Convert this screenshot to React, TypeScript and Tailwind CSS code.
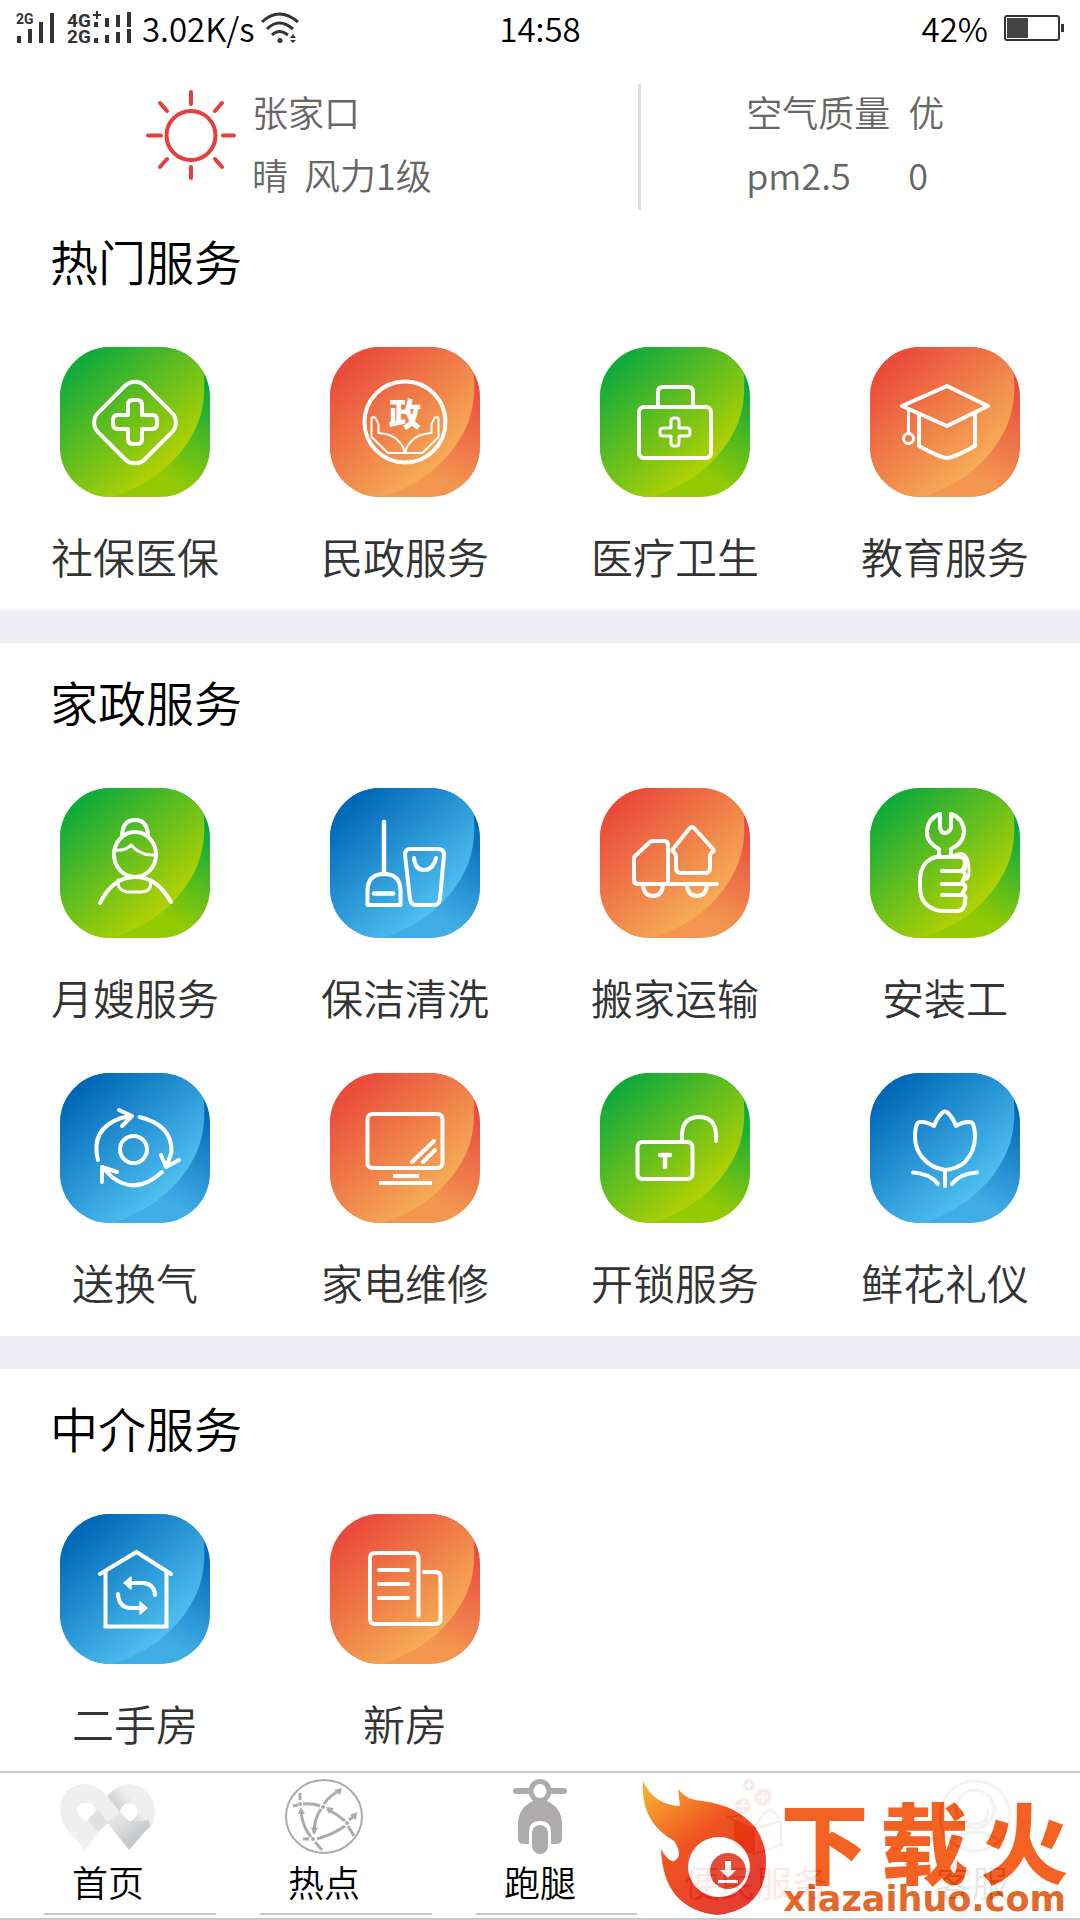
import type { ReactNode } from 'react';

type Tone = 'green' | 'orange' | 'blue';

type Service = {
    name: string;
    tone: Tone;
    icon: ReactNode;
};

const TONES: Record<Tone, { main: [string, string]; edge: [string, string] }> = {
    green: { main: ['#12ab3b', '#bad300'], edge: ['#00a743', '#93ca04'] },
    orange: { main: ['#ea4b3b', '#f6b157'], edge: ['#e94740', '#f39650'] },
    blue: { main: ['#0068b7', '#53c4f3'], edge: ['#0066b5', '#41ade6'] },
};

const hotServices: Service[] = [
    {
        name: '社保医保',
        tone: 'green',
        icon: (
            <>
                <rect x="42" y="42.500" width="66" height="66" rx="14" transform="rotate(45 75 75.500)" />
                <path d="M68 68V58q0-5 5-5h4q5 0 5 5v10h10q5 0 5 5v4q0 5-5 5H82v10q0 5-5 5h-4q-5 0-5-5V82H58q-5 0-5-5v-4q0-5 5-5z" />
            </>
        ),
    },
    {
        name: '民政服务',
        tone: 'orange',
        icon: (
            <>
                <circle cx="75" cy="75" r="40.500" />
                <g strokeWidth="2">
                    <path d="M41.500 90V72q0-2 2-2l2 1 3 6v9q14 1 20 8 6 6 6 12H58z" />
                    <path d="M108.500 90V72q0-2-2-2l-2 1-3 6v9q-14 1-20 8-6 6-6 12h17z" />
                </g>
                <text
                    x="75"
                    y="79"
                    textAnchor="middle"
                    fill="#fff"
                    stroke="none"
                    className="text-[32px] font-black"
                >
                    政
                </text>
            </>
        ),
    },
    {
        name: '医疗卫生',
        tone: 'green',
        icon: (
            <>
                <rect x="39" y="60" width="72" height="51" rx="5" />
                <path d="M58 59V45q0-5 5-5h25q5 0 5 5v14" />
                <path
                    strokeWidth="3"
                    d="M71 81v-7q0-3 3-3h2q3 0 3 3v7h8q3 0 3 3v2q0 3-3 3h-8v7q0 3-3 3h-2q-3 0-3-3v-7h-8q-3 0-3-3v-2q0-3 3-3z"
                />
            </>
        ),
    },
    {
        name: '教育服务',
        tone: 'orange',
        icon: (
            <>
                <path d="M77 39l41 20-41 20-45-20z" />
                <path d="M49 68v31q22 12 28 12t28-12V67" />
                <path d="M38.500 63v23" strokeWidth="3" />
                <circle cx="38.500" cy="91.500" r="5" strokeWidth="3" />
            </>
        ),
    },
];

const homeServices: Service[] = [
    {
        name: '月嫂服务',
        tone: 'green',
        icon: (
            <>
                <ellipse cx="75" cy="66.500" rx="21" ry="22.500" />
                <path d="M62 47q1-15 13-15t13 15" />
                <path d="M56 62q10 1 15-5 10 11 23 10" strokeWidth="3" />
                <path d="M40 115q13-26 35-26t36 25" />
                <path d="M58 92q-1 12 12 12h10q13 0 10-12" strokeWidth="3" />
            </>
        ),
    },
    {
        name: '保洁清洗',
        tone: 'blue',
        icon: (
            <>
                <path d="M54 34v52" strokeWidth="4.500" />
                <path d="M37.500 117v-14q0-17 16.500-17t16.500 17v14z" />
                <path d="M44 105.500h19" strokeWidth="4.500" />
                <path d="M80 61h28q6 0 6 6l-4 44q-1 6-6 6H86q-5 0-6-6l-5-44q0-6 5-6z" />
                <path d="M84 70q1 12 10 12t12-12" />
            </>
        ),
    },
    {
        name: '搬家运输',
        tone: 'orange',
        icon: (
            <>
                <path d="M117 96H38q-4 0-4-4V69l16-15q1-1 3-1h11q4 0 4 4v39" />
                <path d="M89 41q3-4 6 0l18 20q2 2-1 3l-2 3v13q0 5-5 5H81q-5 0-5-5V67l-2-3q-3-1-1-3z" />
                <path d="M43 97q1 11 10 11t10-11M87 97q1 11 10 11t10-11" />
            </>
        ),
    },
    {
        name: '安装工',
        tone: 'green',
        icon: (
            <>
                <path d="M69 68v-7q-13-7-12-18 1-13 13-17v14q1 5 5 5t6-5V26q12 4 13 17 0 12-13 18v7" />
                <path d="M66 69h23q6 0 6 5t-3 9q5 3 2 7l-2 5q5 3 3 6l-3 5q5 2 3 6 0 11-8 11H70q-20-4-20-24v-8q1-18 16-22z" />
                <path d="M72 83h21M72 96h21M72 107h21" />
                <path d="M83 68q16-9 16 15 0 9-5 9" strokeWidth="3" />
                <path d="M94 70q4 4 1 12" strokeWidth="2.500" />
            </>
        ),
    },
    {
        name: '送换气',
        tone: 'blue',
        icon: (
            <>
                <circle cx="73.500" cy="76.500" r="13.500" />
                <path d="M38 87q-8-31 23-42l11-2M59 37l13 6-10 10" />
                <path d="M79.500 44q33 8 32 35l-5 15M101 82l5 12 13-7" />
                <path d="M102 99q-26 24-50 5l-10-10M42 109V94l15 5" />
            </>
        ),
    },
    {
        name: '家电维修',
        tone: 'orange',
        icon: (
            <>
                <rect x="37.500" y="41" width="75" height="54" rx="5" />
                <path d="M82 89l22-21M93 89l12-12" />
                <path d="M63 103h26M49 110h53" strokeLinecap="butt" />
            </>
        ),
    },
    {
        name: '开锁服务',
        tone: 'green',
        icon: (
            <>
                <rect x="37.500" y="69" width="55" height="37" rx="5" />
                <path d="M82 68v-7q1-17 17-17t17 17v7" />
                <path d="M60 82h10M65 82v12" strokeWidth="4.500" />
            </>
        ),
    },
    {
        name: '鲜花礼仪',
        tone: 'blue',
        icon: (
            <>
                <path d="M75 97C55 94 45 78 45 64q0-8 2-13 1-2 4-2 7 0 13 4 3-8 8-13 3-3 6 0 5 5 8 13 6-4 13-4 3 0 4 2 2 5 2 13 0 14-10 25-8 7-20 8z" />
                <path d="M75 97v16M43 99.500q17 1 25 11.500M107 99.500q-17 1-25 11.500" />
            </>
        ),
    },
];

const agencyServices: Service[] = [
    {
        name: '二手房',
        tone: 'blue',
        icon: (
            <>
                <path d="M40 60l36.500-22L111 60" />
                <path d="M45.500 58v54.500h61V58" strokeLinejoin="miter" />
                <path d="M72 69h10q12 0 13 12M58 80q1 14 13 14h9" />
                <path
                    d="M64 69l7-6v12zM87 94l-7-6v12z"
                    fill="#fff"
                    strokeWidth="1.500"
                />
            </>
        ),
    },
    {
        name: '新房',
        tone: 'orange',
        icon: (
            <>
                <path d="M88.500 102V44q0-5-5-5H45q-5 0-5 5v61q0 5 5 5h60q5.500 0 5.500-5V63q0-5-5-5H94" />
                <path d="M49 56h29M49 70h29M49 84h29" />
            </>
        ),
    },
];

function ServiceIcon({ id, tone, children }: { id: string; tone: Tone; children: ReactNode }) {
    const { main, edge } = TONES[tone];

    return (
        <svg viewBox="0 0 150 150" className="size-[150px]" aria-hidden="true">
            <defs>
                <clipPath id={`${id}-clip`}>
                    <rect width="150" height="150" rx="50" />
                </clipPath>
                <linearGradient id={`${id}-main`} x1="18" y1="18" x2="112" y2="124" gradientUnits="userSpaceOnUse">
                    <stop stopColor={main[0]} />
                    <stop offset="1" stopColor={main[1]} />
                </linearGradient>
                <linearGradient id={`${id}-edge`} x1="150" y1="35" x2="105" y2="130" gradientUnits="userSpaceOnUse">
                    <stop stopColor={edge[0]} />
                    <stop offset="1" stopColor={edge[1]} />
                </linearGradient>
            </defs>
            <g clipPath={`url(#${id}-clip)`}>
                <rect width="150" height="150" fill={`url(#${id}-edge)`} />
                <path
                    d="M0 0h140C149 45 144 73 126 98 109 122 86 139 52 150H0z"
                    fill={`url(#${id}-main)`}
                />
            </g>
            <g
                fill="none"
                stroke="#fff"
                strokeWidth="4"
                strokeLinecap="round"
                strokeLinejoin="round"
            >
                {children}
            </g>
        </svg>
    );
}

function ServiceSection({ title, services }: { title: string; services: Service[] }) {
    return (
        <section className="bg-white pt-[30px] pb-[26px] last:flex-1 last:pb-4">
            <h2 className="pl-[50px] text-[48px] leading-14 font-[350] text-black">{title}</h2>
            <ul className="mt-[59px] grid grid-cols-4 gap-y-12">
                {services.map((service) => (
                    <li key={service.name}>
                        <a href="#" className="flex flex-col items-center gap-[31px]">
                            <ServiceIcon id={service.name} tone={service.tone}>
                                {service.icon}
                            </ServiceIcon>
                            <span className="text-[42px] leading-14 font-[350] text-[#333]">
                                {service.name}
                            </span>
                        </a>
                    </li>
                ))}
            </ul>
        </section>
    );
}

function StatusBar() {
    return (
        <div className="flex h-14 items-center px-4 text-[33px] leading-[54px] font-[350] text-black">
            <div className="flex flex-1 items-center">
                <svg
                    width="118"
                    height="34"
                    viewBox="0 0 118 34"
                    fill="#333"
                    className="overflow-visible"
                    aria-hidden="true"
                >
                    <text x="0" y="13" className="font-['Roboto'] text-[14px] font-bold">
                        2G
                    </text>
                    <path d="M1 25h4v7H1zM12 18h4v14h-4zM23 11h4v21h-4zM34 2h4v30h-4z" />
                    <text x="51" y="16" className="font-['Roboto'] text-[19px] font-bold">
                        4G
                    </text>
                    <text x="51" y="32" className="font-['Roboto'] text-[19px] font-bold">
                        2G
                    </text>
                    <path d="M77 3h8v2h-8zM80 0h2v8h-2zM78 11h4v5h-4zM89 7h4v9h-4zM100 4h4v12h-4zM111 1h4v15h-4z" />
                    <path d="M78 27h4v5h-4zM89 24h4v8h-4zM100 21h4v11h-4zM111 18h4v14h-4z" />
                </svg>
                <span className="ml-2">3.02K/s</span>
                <svg width="38" height="32" viewBox="0 0 38 32" className="ml-1.5" aria-hidden="true">
                    <g fill="none" stroke="#333" strokeWidth="3">
                        <path d="M1 10q17-16 36 0M6 17q12-12 26 0M11 23q7-7 16 0" />
                    </g>
                    <circle cx="19" cy="28.500" r="2.500" fill="#333" />
                    <path d="M29 26l3-4 3 4zM29 28l3 3 3-3z" fill="#333" />
                </svg>
            </div>
            <time>14:58</time>
            <div className="flex flex-1 items-center justify-end gap-4">
                <span>42%</span>
                <svg width="60" height="26" viewBox="0 0 60 26" aria-hidden="true">
                    <rect x="1" y="1" width="54" height="24" rx="2" fill="none" stroke="#333" strokeWidth="2" />
                    <path d="M3 3h21v20H3z" fill="#444" />
                    <path d="M57 9h3v8h-3z" fill="#333" />
                </svg>
            </div>
        </div>
    );
}

function Weather() {
    return (
        <div className="mt-7 -mb-2 flex text-[36px] leading-[52px] font-[350] text-[#666]">
            <div className="flex w-[59%] items-start gap-4 pl-[146px]">
                <svg
                    width="90"
                    height="90"
                    viewBox="0 0 90 90"
                    fill="none"
                    stroke="#e43f3b"
                    strokeWidth="4"
                    strokeLinecap="round"
                    className="mt-1.5"
                    aria-hidden="true"
                >
                    <circle cx="45" cy="45.500" r="24.500" />
                    <path d="M45 2v12M45 77v11M2 45.500h13M77 45.500h11M14 13l7 8M76 13l-7 8M14 77l7-8M76 77l-7-8" />
                </svg>
                <div className="flex flex-col gap-[11px] pt-px">
                    <span>张家口</span>
                    <span className="whitespace-pre">晴{'  '}风力1级</span>
                </div>
            </div>
            <div className="ml-px h-[126px] w-[3px] bg-[#ddd]" />
            <dl className="grid grid-cols-[auto_auto] content-start gap-x-[18px] gap-y-[11px] pt-px pl-[105px]">
                <dt>空气质量</dt>
                <dd>优</dd>
                <dt>pm2.5</dt>
                <dd>0</dd>
            </dl>
        </div>
    );
}

const tabs: { name: string; className: string; icon: ReactNode }[] = [
    {
        name: '首页',
        className: 'text-black',
        icon: (
            <svg width="96" height="76" viewBox="0 -5 96 76" aria-hidden="true">
                <defs>
                    <linearGradient id="pin" x1="50" y1="20" x2="78" y2="62" gradientUnits="userSpaceOnUse">
                        <stop stopColor="#ececed" />
                        <stop offset="0.500" stopColor="#dcddde" />
                        <stop offset="0.800" stopColor="#c8c9cb" />
                    </linearGradient>
                    <linearGradient id="fold" x1="47" y1="14" x2="62" y2="2" gradientUnits="userSpaceOnUse">
                        <stop stopColor="#cfd0d2" />
                        <stop offset="1" stopColor="#efeff0" />
                    </linearGradient>
                </defs>
                <path
                    d="M25 66L6 44Q-6 25 6 8q18-16 37 0l26 30V66L47 38 38 48zM26 38l9-11q0-8-9-8t-9 8q1 5 9 11z"
                    fill="#efeff0"
                    fillRule="evenodd"
                />
                <path d="M28 36l10-10 10 13-10 9z" fill="#dfe0e1" />
                <path d="M47 12q20-21 39-5 17 18 4 37l-15 3L60 30q7 8 10 8 8-5 8-11-1-8-9-8-7 0-9 9z" fill="url(#fold)" />
                <path d="M47 38l13-10 10 10 19-2 1 6-21 24z" fill="url(#pin)" />
            </svg>
        ),
    },
    {
        name: '热点',
        className: 'text-black',
        icon: (
            <svg width="78" height="76" viewBox="0 0 78 76" fill="none" stroke="#ababab" strokeWidth="3" aria-hidden="true">
                <ellipse cx="39" cy="37.500" rx="38" ry="36.500" strokeWidth="2" />
                <path d="M29 54q0-14 7-24M39 25q6-9 15-13M8 27l5-1M18 25q10-1 17 2M42 30q10 5 18 12M63 47l6 10M15 14v7M16 32q1 15 10 26M30 63l7 8M18 60h6M32 60q17-5 28-13M64 41l5-4" />
                <path
                    d="M57 9l-2 7-6-5zM41 28l8 1-5 6zM16 28l4 7h-7zM29 56l-3-8 7 1zM72 33l-1 8-6-5z"
                    fill="#ababab"
                    stroke="none"
                />
                <g fill="#ababab" stroke="none">
                    <circle cx="15" cy="25" r="2" />
                    <circle cx="38" cy="28" r="2" />
                    <circle cx="62" cy="44" r="2" />
                    <circle cx="28" cy="60" r="2" />
                </g>
            </svg>
        ),
    },
    {
        name: '跑腿',
        className: 'text-black',
        icon: (
            <svg width="54" height="76" viewBox="0 0 54 76" fill="#adabac" aria-hidden="true">
                <path d="M3 9h48q3 0 3 3t-3 3H3q-3 0-3-3t3-3z" />
                <ellipse cx="27" cy="12" rx="9" ry="9.500" fill="#fff" stroke="#adabac" strokeWidth="5" />
                <path d="M20 22h14q15 7 15 23v14q0 6-6 6h-5V53q0-11-11-11T16 53v12h-5q-6 0-6-6V45q0-16 15-23z" />
                <rect x="19" y="46" width="16" height="29" rx="8" />
            </svg>
        ),
    },
    {
        name: '便民服务',
        className: 'text-red-600',
        icon: (
            <svg width="60" height="76" viewBox="0 0 60 76" fill="none" stroke="#e0302c" strokeWidth="2" aria-hidden="true">
                <g fill="#e0302c" stroke="none">
                    <circle cx="23" cy="6" r="6" />
                    <circle cx="37" cy="18" r="9" />
                    <circle cx="17" cy="27" r="8" />
                </g>
                <path d="M23 3v6M20 6h6M37 13v10M32 18h10M17 22v10M12 27h10" stroke="#fff" />
                <path d="M9 42l19 8v25L9 66z" fill="#e0302c" />
                <path d="M28 50l27-8v24l-27 9M9 42l-7-4 17-2M28 50l8-14 10-6 9 12" />
            </svg>
        ),
    },
    {
        name: '客服',
        className: 'text-black',
        icon: (
            <svg width="78" height="76" viewBox="0 0 78 76" fill="none" stroke="#888" strokeWidth="3" aria-hidden="true">
                <circle cx="42" cy="37" r="35" />
                <circle cx="42" cy="30" r="19" />
                <path d="M29 30q-1 15 13 15t13-15M20 60q22-14 44 0" />
            </svg>
        ),
    },
];

function Watermark() {
    return (
        <div className="pointer-events-none absolute inset-y-0 right-0 flex w-[41%] bg-white opacity-90">
            <svg width="132" height="144" viewBox="0 0 132 144" className="shrink-0" aria-hidden="true">
                <defs>
                    <linearGradient id="flame" x1="10" y1="20" x2="95" y2="120" gradientUnits="userSpaceOnUse">
                        <stop stopColor="#f9a01b" />
                        <stop offset="0.500" stopColor="#ee4208" />
                        <stop offset="1" stopColor="#e32a1c" />
                    </linearGradient>
                </defs>
                <path
                    d="M6 8q11 24 37 25l-2-17q8 11 24 12 34 4 53 26 11 16 11 34 0 49-49 54-54-6-56-66 8 14 13 12 10-5 0-20Q3 49 6 8z"
                    fill="url(#flame)"
                />
                <ellipse cx="82" cy="94" rx="31" ry="30" fill="#fff" />
                <circle cx="91" cy="98" r="18" fill="#e23a24" />
                <path d="M88 88h6v9h5l-8 8-8-8h5zM81 107h20v3H81z" fill="#fff" />
            </svg>
            <div className="flex flex-1 flex-col items-center pt-[22px] whitespace-nowrap">
                <span className="flex gap-3 text-[88px] leading-[88px] font-black text-[#f2520c]">
                    <span>下</span>
                    <span>载</span>
                    <span>火</span>
                </span>
                <span className="font-['DejaVu_Sans'] text-[35px] leading-8 font-bold text-[#df5914]">
                    xiazaihuo.com
                </span>
            </div>
        </div>
    );
}

function TabBar() {
    return (
        <nav className="relative border-y-2 border-[#c9cacc] bg-white">
            <ul className="grid grid-cols-5 pt-1.5 pb-[3px]">
                {tabs.map((tab) => (
                    <li key={tab.name}>
                        <a href="#" className={`flex flex-col items-center ${tab.className}`}>
                            {tab.icon}
                            <span className="mt-1 text-[36px] leading-11 font-[350]">{tab.name}</span>
                        </a>
                        <div className="mt-2.5 ml-[44px] h-0.5 bg-[#c9cacc]" />
                    </li>
                ))}
            </ul>
            <Watermark />
        </nav>
    );
}

export default function App() {
    return (
        <div className="flex min-h-screen flex-col bg-white font-['Noto_Sans_CJK_SC',sans-serif]">
            <header className="relative z-10">
                <StatusBar />
                <Weather />
            </header>
            <main className="flex flex-1 flex-col gap-[33px] bg-[#efeef4]">
                <ServiceSection title="热门服务" services={hotServices} />
                <ServiceSection title="家政服务" services={homeServices} />
                <ServiceSection title="中介服务" services={agencyServices} />
            </main>
            <TabBar />
        </div>
    );
}
